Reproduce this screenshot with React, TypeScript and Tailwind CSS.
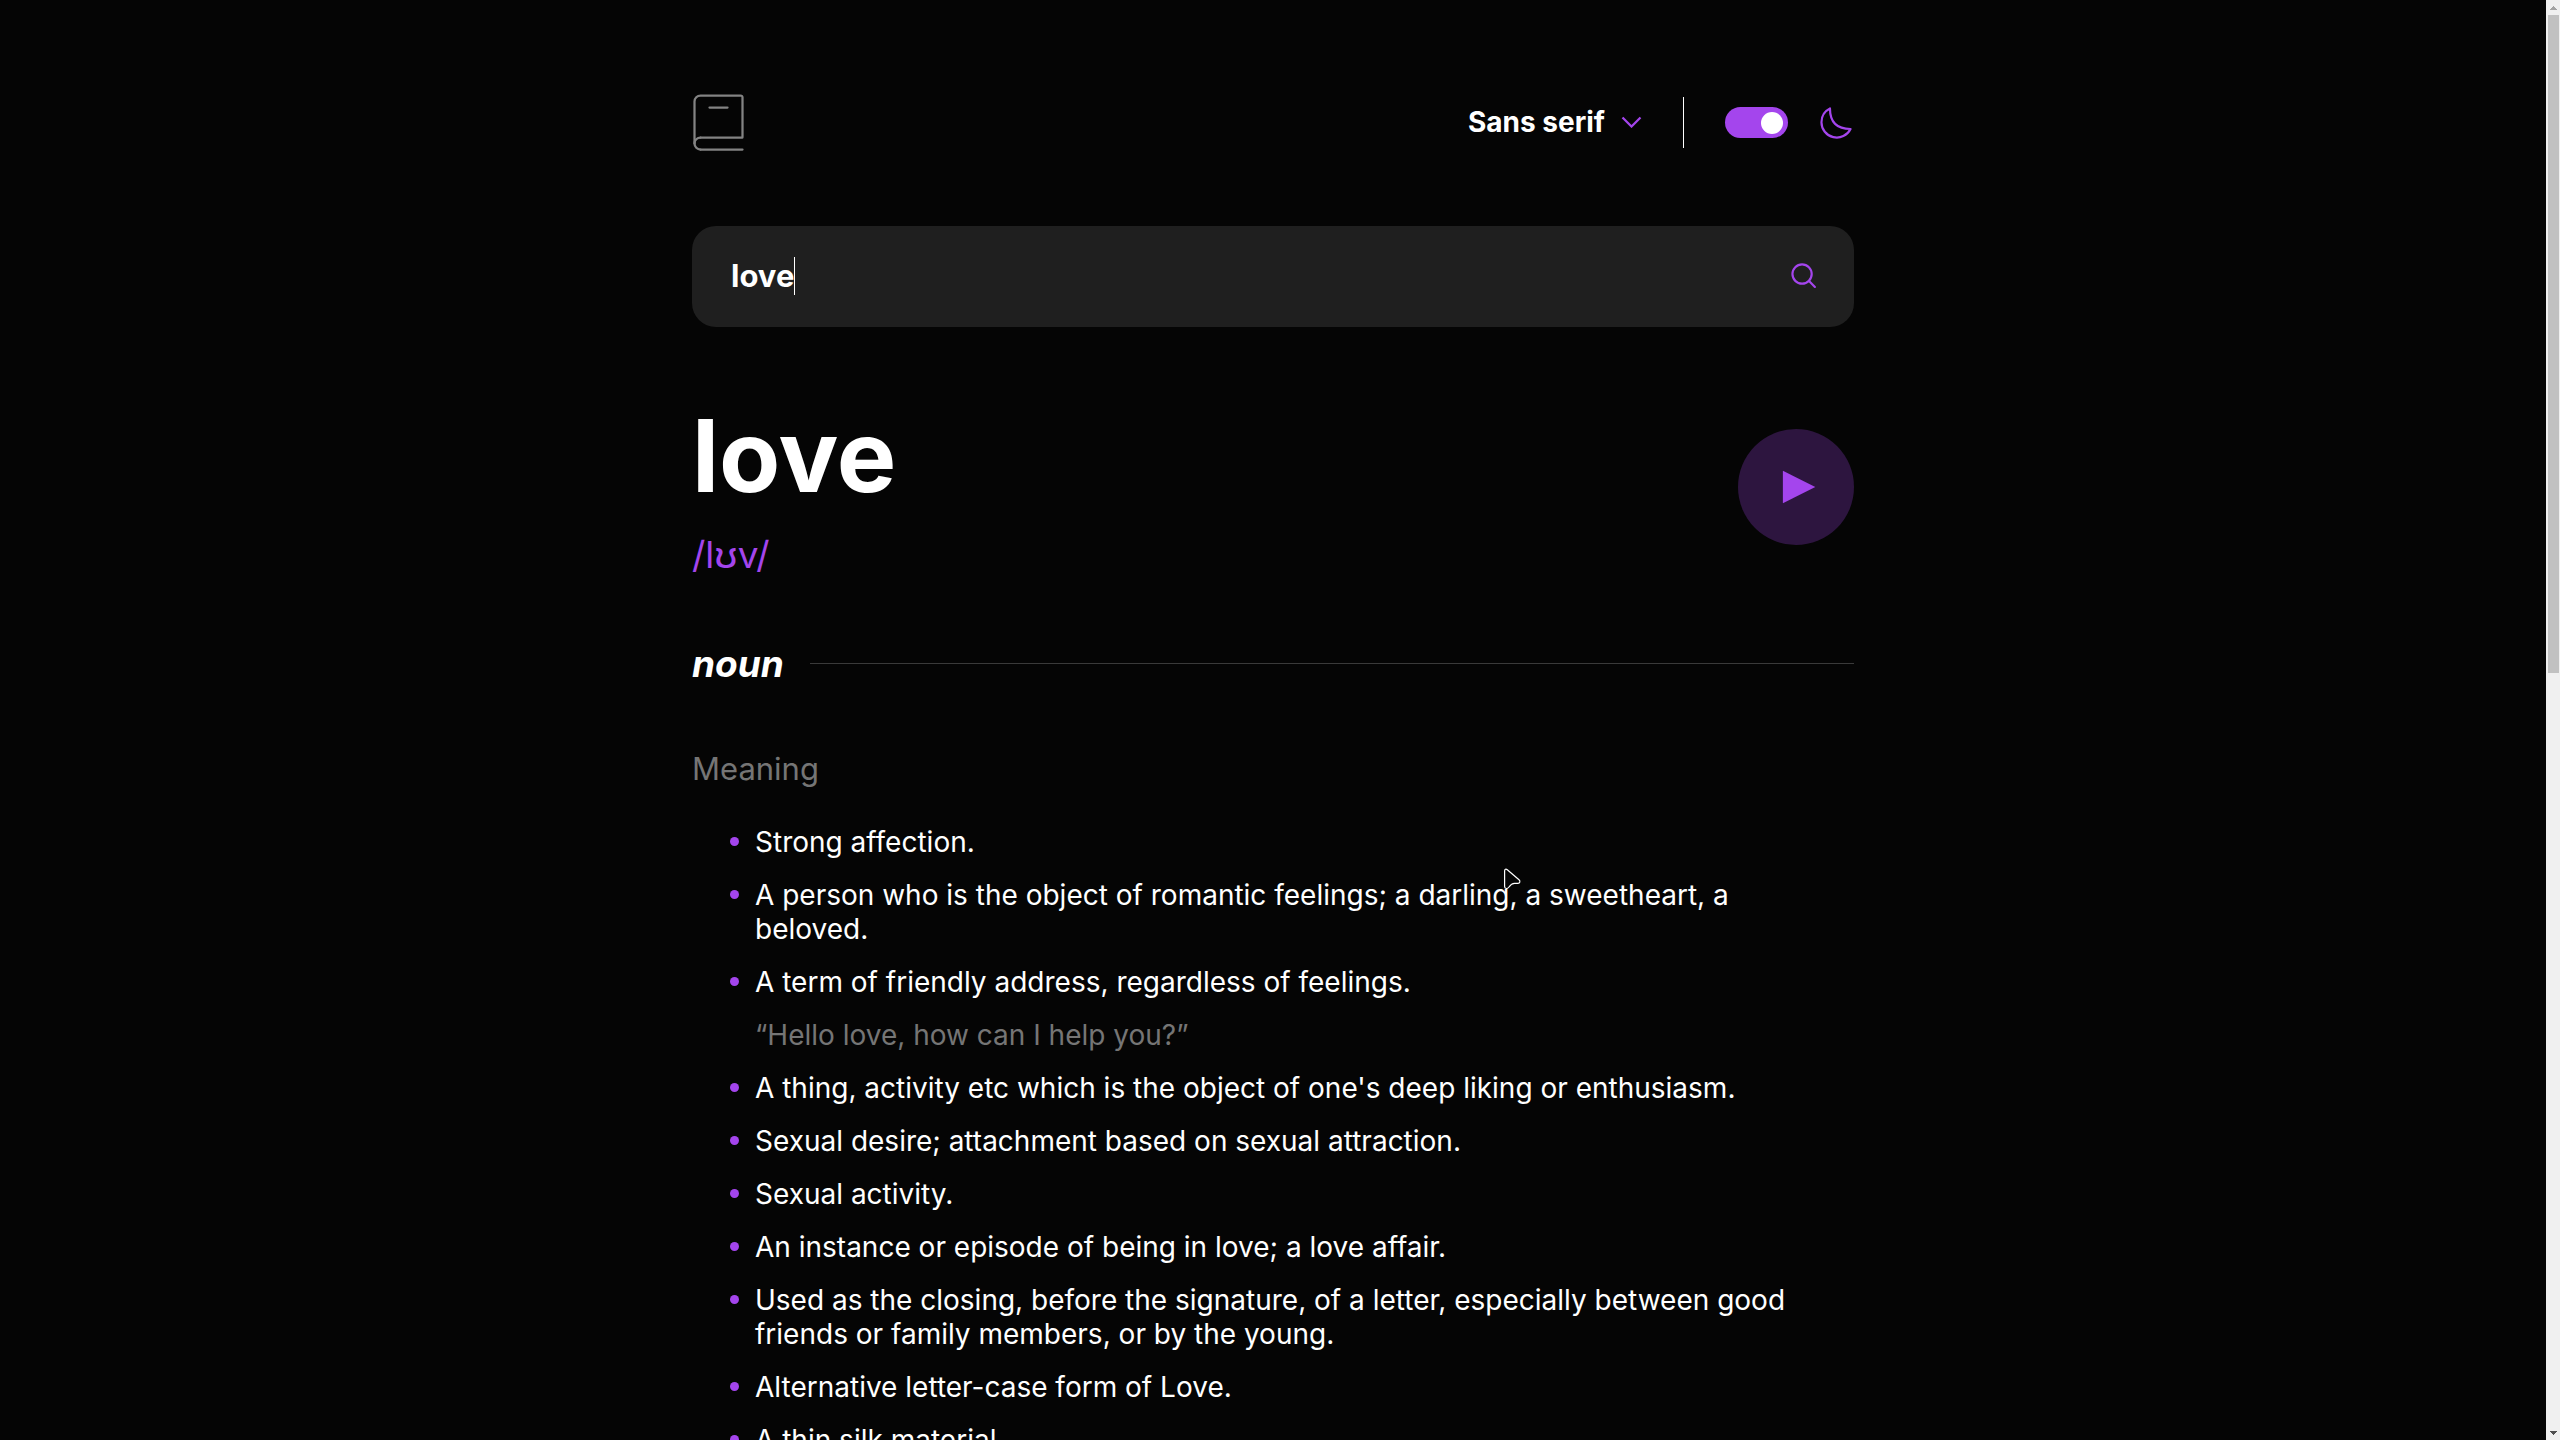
import { useState } from "react";

type Definition = { text: string; example?: string };

const definitions: Definition[] = [
  { text: "Strong affection." },
  { text: "A person who is the object of romantic feelings; a darling, a sweetheart, a beloved." },
  {
    text: "A term of friendly address, regardless of feelings.",
    example: "Hello love, how can I help you?",
  },
  { text: "A thing, activity etc which is the object of one's deep liking or enthusiasm." },
  { text: "Sexual desire; attachment based on sexual attraction." },
  { text: "Sexual activity." },
  { text: "An instance or episode of being in love; a love affair." },
  {
    text: "Used as the closing, before the signature, of a letter, especially between good friends or family members, or by the young.",
  },
  { text: "Alternative letter-case form of Love." },
  { text: "A thin silk material." },
];

function Logo() {
  return (
    <svg className="h-[57px] w-[51px]" viewBox="0 0 34 38" fill="none" stroke="#838383" strokeWidth="1.5" strokeLinecap="round" aria-hidden="true">
      <path d="M1 33V5a4 4 0 0 1 4-4h26.8A1.2 1.2 0 0 1 33 2.2v26.228M5 29h28M5 37h28" />
      <path strokeLinejoin="round" d="M5 37a4 4 0 1 1 0-8" />
      <path d="M11 9h12" />
    </svg>
  );
}

function Header() {
  const [dark, setDark] = useState(true);
  return (
    <header className="flex items-center justify-between pr-0.5 pl-px">
      <a href="#" aria-label="Home">
        <Logo />
      </a>
      <div className="flex items-center">
        <button type="button" className="flex items-center gap-4 pb-0.5 text-[28px] leading-[34px] font-bold">
          Sans serif
          <svg className="h-3 w-[21px]" viewBox="0 0 14 8" fill="none" stroke="#A445ED" strokeWidth="1.5" aria-hidden="true">
            <path d="m1 1 6 6 6-6" />
          </svg>
        </button>
        <div className="mx-[41px] h-[51px] w-px bg-white" />
        <label className="flex cursor-pointer items-center gap-8">
          <input
            type="checkbox"
            aria-label="Dark mode"
            checked={dark}
            onChange={(e) => setDark(e.target.checked)}
            className="peer sr-only"
          />
          <span className="flex h-[31px] w-[63px] items-center justify-start rounded-full bg-[#A445ED] px-[5px] peer-checked:justify-end">
            <span className="size-[22px] rounded-full bg-white" />
          </span>
          <svg className="size-8" viewBox="0 0 22 22" fill="none" stroke="#A445ED" strokeWidth="1.5" strokeLinecap="round" strokeLinejoin="round" aria-hidden="true">
            <path d="M1 10.449a10.544 10.544 0 0 0 19.993 4.686C11.544 15.135 6.858 10.448 6.858 1A10.545 10.545 0 0 0 1 10.449Z" />
          </svg>
        </label>
      </div>
    </header>
  );
}

function SearchBar() {
  const [query, setQuery] = useState("love");
  return (
    <form className="mt-[75px] flex items-center rounded-3xl bg-[#1F1F1F] pt-[31px] pr-[37px] pb-8 pl-[39px]" onSubmit={(e) => e.preventDefault()}>
      <div className="relative flex flex-1">
        <input
          type="text"
          aria-label="Search for a word"
          value={query}
          onChange={(e) => setQuery(e.target.value)}
          className="h-[38px] w-full bg-transparent text-[31px] font-bold caret-transparent outline-none"
        />
        <span className="pointer-events-none absolute top-0 left-[63px] h-[38px] w-px bg-white" />
      </div>
      <button type="submit" aria-label="Search">
        <svg className="size-[26px]" viewBox="0 0 18 18" fill="none" stroke="#A445ED" strokeWidth="1.5" strokeLinecap="round" strokeLinejoin="round" aria-hidden="true">
          <path d="m12.663 12.663 3.887 3.887M1 7.664a6.665 6.665 0 1 0 13.33 0 6.665 6.665 0 0 0-13.33 0Z" />
        </svg>
      </button>
    </form>
  );
}

function Scrollbar() {
  return (
    <div className="flex w-3.5 shrink-0 flex-col items-center bg-[#F0F0F0]" aria-hidden="true">
      <svg className="h-[15px] w-3.5 shrink-0" viewBox="0 0 14 15" fill="#A3A3A3" shapeRendering="crispEdges">
        <path d="M7 6h1v1h1v1h1v1h1v1H4V9h1V8h1V7h1z" />
      </svg>
      <div className="flex w-full flex-1 flex-col pr-px pl-0.5">
        <div className="basis-[46.7%] bg-[#C1C1C1]" />
      </div>
      <svg className="h-[15px] w-3.5 shrink-0" viewBox="0 0 14 15" fill="#505050" shapeRendering="crispEdges">
        <path d="M4 6h7v1h-1v1H9v1H8v1H7V9H6V8H5V7H4z" />
      </svg>
    </div>
  );
}

export default function App() {
  return (
    <div className="relative flex h-screen overflow-hidden bg-[#050505] font-['Inter',sans-serif] text-white">
      <main className="min-w-0 flex-1 overflow-hidden px-6 pt-[94px]">
        <div className="mx-auto max-w-[1162px]">
          <Header />
          <SearchBar />

          <section className="mt-[69px] flex items-center justify-between">
            <div>
              <h1 className="text-[100px] leading-[120px] font-bold">love</h1>
              <p className="mt-4 text-[37px] leading-[45px] text-[#A445ED]">/lʊv/</p>
            </div>
            <button type="button" aria-label="Play pronunciation" className="rounded-full bg-[#2D153F]">
              <svg className="size-[116px]" viewBox="0 0 75 75" fill="#A445ED" aria-hidden="true">
                <path d="M29 27v21l21-10.5z" />
              </svg>
            </button>
          </section>

          <section>
            <div className="mt-16 flex items-center gap-[26px]">
              <h2 className="text-[37px] leading-[45px] font-bold italic">noun</h2>
              <div className="h-px flex-1 bg-[#3A3A3A]" />
            </div>
            <h3 className="mt-16 text-[31px] leading-[38px] text-[#757575]">Meaning</h3>
            <ul className="mt-[37px] flex flex-col gap-[19px] pr-8 pl-[38px] text-[28px] leading-[34px]">
              {definitions.map((d) => (
                <li key={d.text} className="flex gap-4">
                  <span className="mt-3 size-[9px] shrink-0 rounded-full bg-[#A445ED]" />
                  <div className="flex flex-col gap-[19px]">
                    <p>{d.text}</p>
                    {d.example && <p className="text-[#757575]">“{d.example}”</p>}
                  </div>
                </li>
              ))}
            </ul>
          </section>
        </div>
      </main>
      <Scrollbar />
      <svg className="pointer-events-none absolute top-[868px] left-[1504px] h-[22px] w-[17px]" viewBox="0 0 17 22" fill="#050505" stroke="#FFFFFF" strokeWidth="1.2" aria-hidden="true">
        <path d="M.6 3C.6 1 2 .6 3.300 1.700L15 11.800C16.500 13.200 16 15.300 14 15.300H10.500C8 15.300 6.500 16.800 5 19C3.500 21.200.6 21 .6 18.500Z" />
      </svg>
    </div>
  );
}
